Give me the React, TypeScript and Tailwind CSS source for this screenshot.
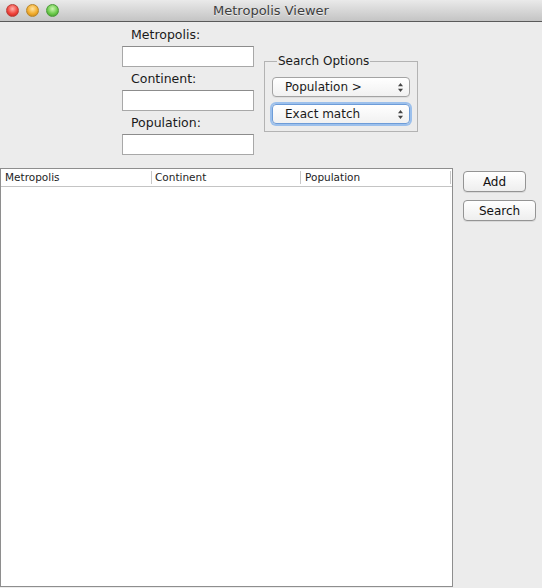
import React from "react";

function Arrows() {
  return (
    <svg width="7" height="11" viewBox="0 0 7 11" className="shrink-0">
      <path d="M3.5 1 L6 4.2 L1 4.2 Z" fill="#444" />
      <path d="M3.5 10 L6 6.8 L1 6.8 Z" fill="#444" />
    </svg>
  );
}

function Select({ label, focused }: { label: string; focused?: boolean }) {
  return (
    <div
      className={
        "flex h-[20px] w-[138px] items-center justify-between rounded-[4px] border bg-gradient-to-b from-[#ffffff] to-[#f1f1f1] pl-[12px] pr-[5px] text-[12px] text-[#1a1a1a] " +
        (focused
          ? "border-[#6d9cd8] shadow-[0_0_0_2px_#9cc0ec]"
          : "border-[#a3a3a3] shadow-[0_1px_0_rgba(0,0,0,0.06)]")
      }
    >
      <span className="leading-none">{label}</span>
      <Arrows />
    </div>
  );
}

function Field({ label }: { label: string }) {
  return (
    <div className="flex flex-col">
      <div className="h-[16px] pl-[9px] text-[12.5px] leading-[16px] text-[#1a1a1a]">{label}</div>
      <div className="mt-[3px] h-[21px] w-[132px] border border-[#a8a8a8] border-t-[#8c8c8c] bg-white" />
    </div>
  );
}

function Button({ label, w }: { label: string; w: string }) {
  return (
    <div
      className={
        "flex h-[21px] items-center justify-center rounded-[4px] border border-[#949494] bg-gradient-to-b from-[#ffffff] to-[#eeeeee] text-[12px] text-[#111] shadow-[0_1px_0_rgba(0,0,0,0.08)] " +
        w
      }
    >
      {label}
    </div>
  );
}

export default function App() {
  return (
    <div
      className="flex h-[588px] w-[542px] flex-col overflow-hidden bg-[#ececec]"
      style={{ fontFamily: '"DejaVu Sans", "Liberation Sans", sans-serif' }}
    >
      {/* Title bar */}
      <div className="relative flex h-[22px] shrink-0 items-center border-b border-[#5a5a5a] bg-gradient-to-b from-[#eaeaea] to-[#c4c4c4]">
        <div className="absolute left-[6px] top-[4px] flex gap-[7px]">
          <div className="h-[13px] w-[13px] rounded-full border border-[#b8403a] bg-[radial-gradient(circle_at_50%_35%,#ffb3ad_0%,#f0453d_55%,#b91c16_100%)]" />
          <div className="h-[13px] w-[13px] rounded-full border border-[#b8862a] bg-[radial-gradient(circle_at_50%_35%,#ffe4a3_0%,#f2ad2e_55%,#bb7a12_100%)]" />
          <div className="h-[13px] w-[13px] rounded-full border border-[#4b9a3a] bg-[radial-gradient(circle_at_50%_35%,#cdf5b2_0%,#6ccb4c_55%,#3a8b23_100%)]" />
        </div>
        <div className="w-full text-center text-[13px] text-[#3e3e3e] [text-shadow:0_1px_0_rgba(255,255,255,0.6)]">
          Metropolis Viewer
        </div>
      </div>

      {/* Top form area */}
      <div className="flex h-[146px] shrink-0 items-start">
        <div className="ml-[122px] mt-[5px] flex flex-col gap-[4px]">
          <Field label="Metropolis:" />
          <Field label="Continent:" />
          <Field label="Population:" />
        </div>
        <fieldset className="ml-[10px] mt-[31px] w-[154px] border border-[#b3b3b3] px-[7px] pb-[7px]">
          <legend className="ml-[5px] px-[1px] text-[12px] leading-[16px] text-[#1a1a1a]">Search Options</legend>
          <div className="mt-[8px] flex flex-col gap-[7px]">
            <Select label="Population >" />
            <Select label="Exact match" focused />
          </div>
        </fieldset>
      </div>

      {/* Table + buttons */}
      <div className="flex flex-1 items-start">
        <div className="flex h-[419px] w-[453px] flex-col border border-[#8e8e8e] bg-white">
          <div className="flex h-[18px] shrink-0 items-center border-b border-[#c4c4c4] text-[10.5px] text-[#1e1e1e]">
            <div className="flex h-full w-[150px] items-center pl-[4px]">Metropolis</div>
            <div className="h-[13px] w-px bg-[#c8c8c8]" />
            <div className="flex h-full w-[148px] items-center pl-[3px]">Continent</div>
            <div className="h-[13px] w-px bg-[#c8c8c8]" />
            <div className="flex h-full w-[149px] items-center pl-[4px]">Population</div>
            <div className="h-[13px] w-px bg-[#c8c8c8]" />
            <div className="flex-1" />
          </div>
          <div className="flex-1" />
        </div>
        <div className="ml-[10px] mt-[3px] flex flex-col gap-[8px]">
          <Button label="Add" w="w-[63px]" />
          <Button label="Search" w="w-[73px]" />
        </div>
      </div>
    </div>
  );
}
